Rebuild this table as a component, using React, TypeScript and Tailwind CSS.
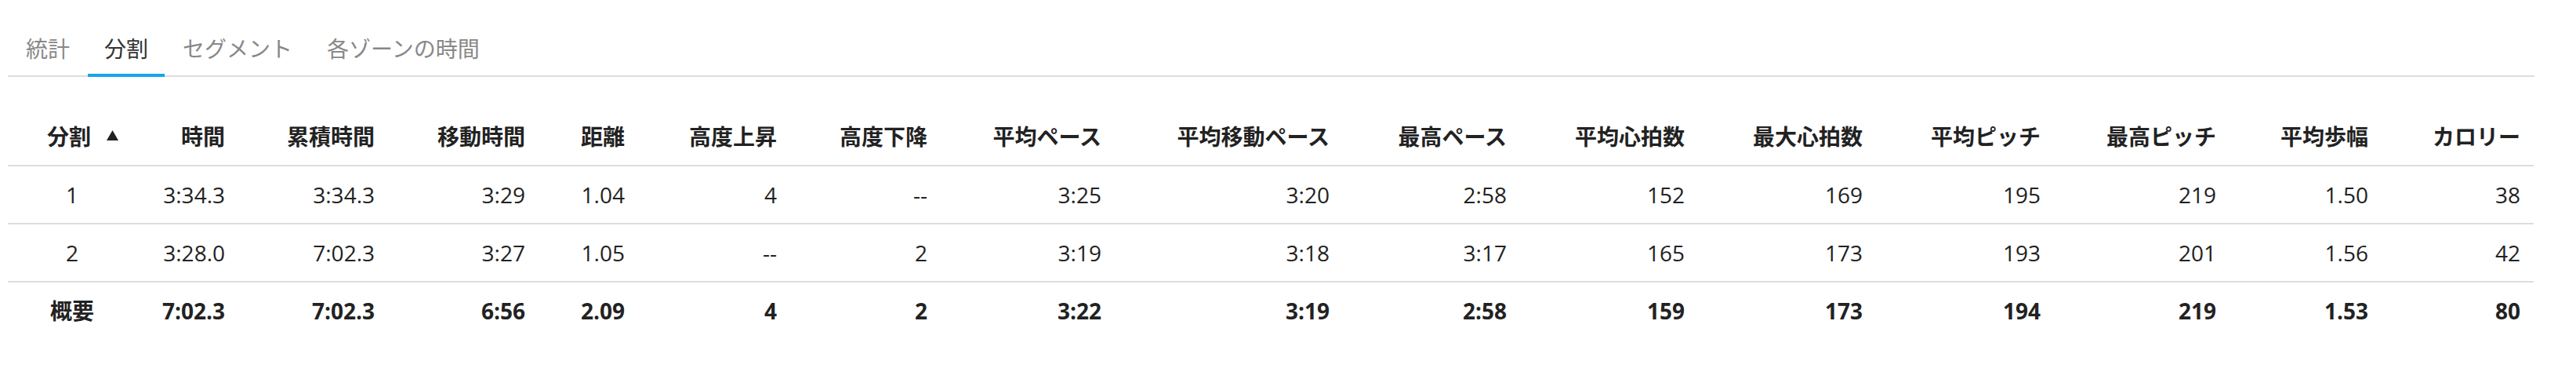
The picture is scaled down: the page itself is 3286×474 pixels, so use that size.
const tabs = ["統計", "分割", "セグメント", "各ゾーンの時間"];

const columns = [
  { label: "分割", width: "w-[164px]" },
  { label: "時間", width: "w-[130px]" },
  { label: "累積時間", width: "w-[191px]" },
  { label: "移動時間", width: "w-[192px]" },
  { label: "距離", width: "w-[127px]" },
  { label: "高度上昇", width: "w-[194px]" },
  { label: "高度下降", width: "w-[192px]" },
  { label: "平均ペース", width: "w-[222px]" },
  { label: "平均移動ペース", width: "w-[291px]" },
  { label: "最高ペース", width: "w-[226px]" },
  { label: "平均心拍数", width: "w-[227px]" },
  { label: "最大心拍数", width: "w-[227px]" },
  { label: "平均ピッチ", width: "w-[227px]" },
  { label: "最高ピッチ", width: "w-[224px]" },
  { label: "平均歩幅", width: "w-[194px]" },
  { label: "カロリー", width: "w-[194px]" },
];

const rows = [
  ["1", "3:34.3", "3:34.3", "3:29", "1.04", "4", "--", "3:25", "3:20", "2:58", "152", "169", "195", "219", "1.50", "38"],
  ["2", "3:28.0", "7:02.3", "3:27", "1.05", "--", "2", "3:19", "3:18", "3:17", "165", "173", "193", "201", "1.56", "42"],
];

const summary = ["概要", "7:02.3", "7:02.3", "6:56", "2.09", "4", "2", "3:22", "3:19", "2:58", "159", "173", "194", "219", "1.53", "80"];

export default function App() {
  return (
    <div className="bg-white w-[3286px] h-[474px] pl-[10px] pt-[42px] font-['Open_Sans','Noto_Sans_CJK_JP',sans-serif] text-[28px] text-[#222]">
      <div className="w-[3223px]">

        {/* tabs */}
        <div className="flex gap-[2px] pl-[2px] border-b-2 border-[#dddddd]">
          {tabs.map((t) => (
            <div
              key={t}
              className={
                t === "分割"
                  ? "px-[21px] pb-[12px] leading-[40px] -mb-[2px] border-b-4 border-[#11a6ec] text-[#333]"
                  : "px-[21px] pb-[12px] leading-[40px] -mb-[2px] border-b-4 border-transparent text-[#888]"
              }
            >
              {t}
            </div>
          ))}
        </div>

        {/* splits table */}
        <table className="mt-[40px] w-[3222px] table-fixed border-collapse">
          <colgroup>
            {columns.map((c) => (
              <col key={c.label} className={c.width} />
            ))}
          </colgroup>
          <thead>
            <tr className="border-b-2 border-[#dddddd]">
              {columns.map((c, i) =>
                i === 0 ? (
                  <th key={c.label} className="py-4 pr-[8px] leading-[40px] font-bold text-center">
                    <span className="relative inline-block">
                      {c.label}
                      <svg
                        className="absolute left-[calc(100%+20px)] top-[12px]"
                        width="15"
                        height="13"
                        viewBox="0 0 15 13"
                      >
                        <polygon points="7.5,0 15,13 0,13" fill="#222" />
                      </svg>
                    </span>
                  </th>
                ) : (
                  <th key={c.label} className="py-4 pr-[17px] leading-[40px] font-bold text-right">
                    {c.label}
                  </th>
                )
              )}
            </tr>
          </thead>
          <tbody>
            {rows.map((r) => (
              <tr key={r[0]} className="border-b-2 border-[#dddddd]">
                {r.map((v, i) => (
                  <td
                    key={i}
                    className={
                      i === 0
                        ? "py-4 leading-[40px] text-center"
                        : "py-4 pr-[17px] leading-[40px] text-right"
                    }
                  >
                    {v}
                  </td>
                ))}
              </tr>
            ))}
            <tr>
              {summary.map((v, i) => (
                <td
                  key={i}
                  className={
                    i === 0
                      ? "py-4 leading-[40px] font-bold text-center"
                      : "py-4 pr-[17px] leading-[40px] font-bold text-right"
                  }
                >
                  {v}
                </td>
              ))}
            </tr>
          </tbody>
        </table>

      </div>
    </div>
  );
}
